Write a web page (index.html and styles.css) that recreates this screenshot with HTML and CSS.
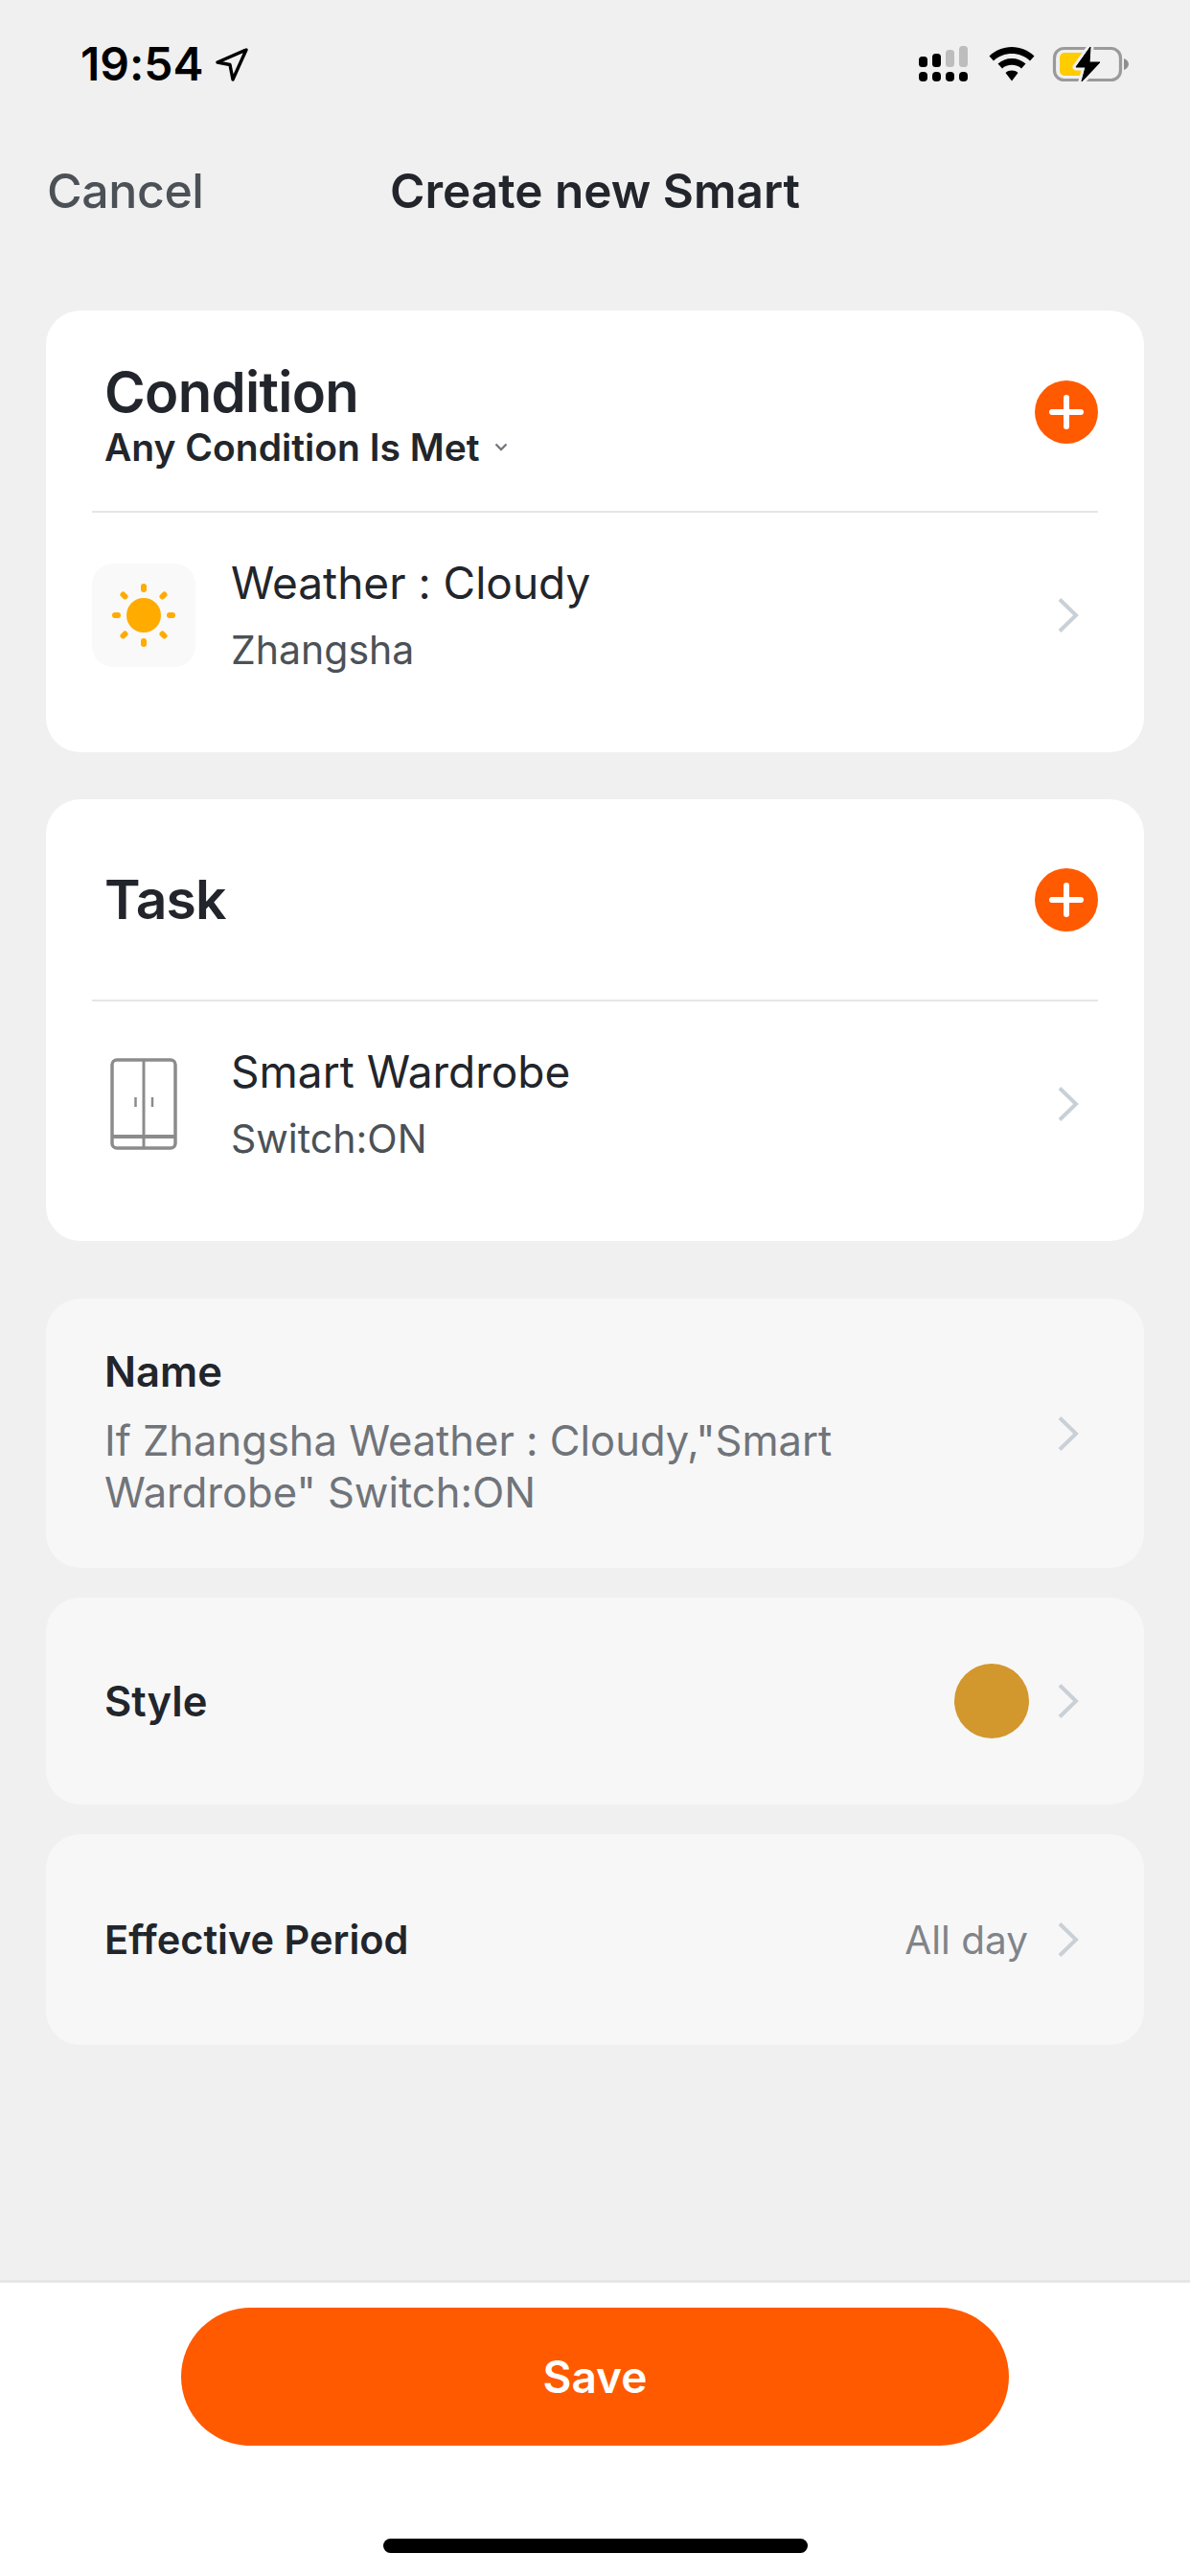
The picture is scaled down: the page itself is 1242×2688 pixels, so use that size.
FILE: index.html
```html
<!DOCTYPE html>
<html lang="en">
<head>
  <meta charset="UTF-8">
  <meta name="viewport" content="width=device-width, initial-scale=1.0">
  <title>Create new Smart</title>
  <link rel="stylesheet" href="styles.css">
</head>
<body>
  <div class="page">
    <div class="status-bar">
      <div class="status-left">
        <span class="time">19:54</span>
        <svg class="arrow" width="34" height="35" viewBox="0 0 34 35"><path d="M32 2 L2 15 L15 17.500 L18 33 Z" fill="none" stroke="#000" stroke-width="3.400" stroke-linejoin="round"/></svg>
      </div>
      <div class="status-right">
        <svg class="signal" width="52" height="38" viewBox="0 0 52 38">
          <rect x="0" y="11" width="9" height="11" rx="3.5" fill="#000"/>
          <rect x="14" y="8" width="9" height="14" rx="3.5" fill="#000"/>
          <rect x="28" y="4" width="9" height="18" rx="3.5" fill="#bdbdbd"/>
          <rect x="42" y="0" width="9" height="22" rx="3.5" fill="#bdbdbd"/>
          <rect x="0" y="27" width="9" height="10" rx="4" fill="#000"/>
          <rect x="14" y="27" width="9" height="10" rx="4" fill="#000"/>
          <rect x="28" y="27" width="9" height="10" rx="4" fill="#000"/>
          <rect x="42" y="27" width="9" height="10" rx="4" fill="#000"/>
        </svg>
        <svg class="wifi" width="48" height="36" viewBox="0 0 48 36">
          <path d="M24 0 C33 0 41 3.500 47.500 9.500 L43 14.500 C38 9.500 31 7 24 7 C17 7 10 9.500 5 14.500 L0.500 9.500 C7 3.500 15 0 24 0 Z" fill="#000"/>
          <path d="M24 12 C29.500 12 34.500 14 38.500 17.500 L34 22.500 C31.500 20 28 18.800 24 18.800 C20 18.800 16.500 20 14 22.500 L9.500 17.500 C13.500 14 18.500 12 24 12 Z" fill="#000"/>
          <path d="M24 24.500 C26.500 24.500 28.500 25.200 30.500 27 L24 35.500 L17.500 27 C19.500 25.200 21.500 24.500 24 24.500 Z" fill="#000"/>
        </svg>
        <svg class="battery" width="80" height="40" viewBox="0 0 80 40">
          <rect x="2.500" y="3.500" width="69" height="33" rx="10" fill="none" stroke="#9a9a9a" stroke-width="3.200"/>
          <path d="M75 14 C78 15 80 17.500 80 20 C80 22.500 78 25 75 26 Z" fill="#8e8e8e"/>
          <rect x="8" y="8" width="30" height="24" rx="5" fill="#ffcc00"/>
          <path d="M40 2 L25 23 L35 23 L31 38 L50 18 L39 18 Z" fill="#000" stroke="#f0f0f0" stroke-width="7" stroke-linejoin="round" paint-order="stroke"/>
          <path d="M40 2 L25 23 L35 23 L31 38 L50 18 L39 18 Z" fill="#000" stroke="#000" stroke-width="1" stroke-linejoin="round"/>
        </svg>
      </div>
    </div>

    <div class="nav-bar">
      <span class="cancel">Cancel</span>
      <span class="nav-title">Create new Smart</span>
    </div>

    <main class="content">
      <section class="card">
        <div class="card-head condition-head">
          <div class="condition-text">
            <div class="card-title">Condition</div>
            <div class="match-mode">Any Condition Is Met
              <svg width="14" height="10" viewBox="0 0 14 10"><path d="M1.500 1.500 L7 7 L12.500 1.500" fill="none" stroke="#77777f" stroke-width="2.400"/></svg>
            </div>
          </div>
          <div class="add-btn"></div>
        </div>
        <div class="item">
          <div class="item-icon weather-icon">
            <svg width="70" height="70" viewBox="0 0 70 70">
              <circle cx="35" cy="35" r="18" fill="#ffab00"/>
              <g stroke="#ffab00" stroke-width="6" stroke-linecap="round">
                <path d="M35 5 V8"/><path d="M35 62 V65"/>
                <path d="M5 35 H8"/><path d="M62 35 H65"/>
                <path d="M13.500 13.500 L15.500 15.500"/><path d="M54.500 54.500 L56.500 56.500"/>
                <path d="M56.500 13.500 L54.500 15.500"/><path d="M15.500 54.500 L13.500 56.500"/>
              </g>
            </svg>
          </div>
          <div class="item-text">
            <div class="item-name">Weather : Cloudy</div>
            <div class="item-sub">Zhangsha</div>
          </div>
          <svg class="chevron" width="22" height="36" viewBox="0 0 22 36"><path d="M2 1.500 L19 18 L2 34.500" fill="none" stroke="#c9d0d6" stroke-width="4"/></svg>
        </div>
      </section>

      <section class="card">
        <div class="card-head task-head">
          <div class="card-title task-title">Task</div>
          <div class="add-btn"></div>
        </div>
        <div class="item">
          <div class="item-icon">
            <svg width="70" height="96" viewBox="0 0 70 96" fill="none" stroke="#8c8c8c">
              <rect x="2" y="2" width="66" height="92" rx="5" stroke-width="3.500"/>
              <path d="M35 2 V94" stroke-width="3"/>
              <path d="M2 82 H68" stroke-width="4"/>
              <path d="M26.500 41 V51 M44 41 V51" stroke-width="2.500"/>
            </svg>
          </div>
          <div class="item-text">
            <div class="item-name">Smart Wardrobe</div>
            <div class="item-sub">Switch:ON</div>
          </div>
          <svg class="chevron" width="22" height="36" viewBox="0 0 22 36"><path d="M2 1.500 L19 18 L2 34.500" fill="none" stroke="#c9d0d6" stroke-width="4"/></svg>
        </div>
      </section>

      <section class="row name-row">
        <div class="row-main">
          <div class="row-label">Name</div>
          <div class="row-desc">If Zhangsha Weather : Cloudy,"Smart Wardrobe" Switch:ON</div>
        </div>
        <svg class="chevron" width="22" height="36" viewBox="0 0 22 36"><path d="M2 1.500 L19 18 L2 34.500" fill="none" stroke="#c9d0d6" stroke-width="4"/></svg>
      </section>

      <section class="row style-row">
        <div class="row-label">Style</div>
        <div class="row-end">
          <div class="style-dot"></div>
          <svg class="chevron" width="22" height="36" viewBox="0 0 22 36"><path d="M2 1.500 L19 18 L2 34.500" fill="none" stroke="#c9d0d6" stroke-width="4"/></svg>
        </div>
      </section>

      <section class="row period-row">
        <div class="row-label period-label">Effective Period</div>
        <div class="row-end">
          <span class="row-value">All day</span>
          <svg class="chevron" width="22" height="36" viewBox="0 0 22 36"><path d="M2 1.500 L19 18 L2 34.500" fill="none" stroke="#c9d0d6" stroke-width="4"/></svg>
        </div>
      </section>
    </main>

    <footer class="footer">
      <button class="save-btn">Save</button>
      <div class="home-bar"></div>
    </footer>
  </div>
</body>
</html>
```

FILE: styles.css
```css
* {
  box-sizing: border-box;
}
html, body {
  margin: 0;
  padding: 0;
}
body {
  font-family: Inter, "Liberation Sans", sans-serif;
  font-feature-settings: "calt" 0;
  background-color: #f0f0f0;
  color: #22252b;
}
.page {
  width: 1242px;
  height: 2688px;
  display: flex;
  flex-direction: column;
}

/* status bar */
.status-bar {
  height: 134px;
  padding: 44px 64px 0 84px;
  display: flex;
  justify-content: space-between;
  align-items: flex-start;
}
.status-left {
  display: flex;
  align-items: center;
  gap: 13px;
}
.time {
  font-size: 48px;
  line-height: 46px;
  font-weight: 600;
  color: #000;
}
.status-right {
  display: flex;
  align-items: center;
  gap: 21px;
  padding-top: 3px;
}
.battery {
  margin-left: -3px;
}

/* nav */
.nav-bar {
  position: relative;
  height: 190px;
  display: flex;
  justify-content: center;
  padding-top: 36px;
}
.cancel {
  position: absolute;
  left: 49px;
  top: 36px;
  font-size: 50px;
  line-height: 58px;
  font-weight: 500;
  letter-spacing: -0.400px;
  color: #4b5156;
}
.nav-title {
  font-size: 49.500px;
  line-height: 58px;
  font-weight: 600;
}

/* cards */
.content {
  flex: 1;
  padding: 0 48px;
}
.card {
  background-color: #fff;
  border-radius: 36px;
  height: 461px;
  margin-bottom: 49px;
  padding: 0 48px;
}
.card-head {
  display: flex;
  justify-content: space-between;
  align-items: center;
  border-bottom: 2px solid #e6e6e6;
  height: 211px;
}
.condition-head {
  padding: 2px 0 0 13px;
}
.condition-text {
  margin-top: 5px;
}
.task-head {
  padding: 0 0 0 13px;
}
.card-title {
  font-size: 58px;
  line-height: 68px;
  font-weight: 600;
  letter-spacing: -0.700px;
}
.task-title {
  font-size: 57px;
  letter-spacing: -0.800px;
}
.match-mode {
  font-size: 39px;
  line-height: 46px;
  font-weight: 600;
  margin-top: 1px;
  display: flex;
  align-items: center;
  gap: 15px;
}
.add-btn {
  width: 66px;
  height: 66px;
  border-radius: 50%;
  background-color: #ff5a00;
  position: relative;
}
.add-btn::before,
.add-btn::after {
  content: "";
  position: absolute;
  background-color: #fff;
  border-radius: 3px;
}
.add-btn::before {
  left: 15px;
  top: 30px;
  width: 36px;
  height: 6px;
}
.add-btn::after {
  left: 30px;
  top: 15px;
  width: 6px;
  height: 36px;
}
.item {
  height: 250px;
  display: flex;
  align-items: center;
  padding-bottom: 36px;
}
.item-icon {
  width: 108px;
  height: 108px;
  margin-right: 37px;
  display: flex;
  align-items: center;
  justify-content: center;
  flex: none;
}
.weather-icon {
  background-color: #f9f9f9;
  border-radius: 22px;
}
.item-text {
  flex: 1;
  padding-bottom: 2px;
}
.item-name {
  font-size: 46px;
  line-height: 56px;
}
.item-sub {
  font-size: 41px;
  line-height: 48px;
  margin-top: 18px;
  color: #4b5156;
}
.chevron {
  flex: none;
}
.card .chevron {
  margin-right: 20px;
}

/* rows */
.row {
  background-color: #f7f7f7;
  border-radius: 36px;
  padding: 0 68px 0 61px;
  display: flex;
  justify-content: space-between;
  align-items: center;
  margin-bottom: 31px;
}
.name-row {
  height: 281px;
  margin-top: 60px;
}
.style-row {
  height: 216px;
}
.period-row {
  height: 220px;
}
.row-main {
  width: 860px;
}
.row-label {
  font-size: 43.500px;
  line-height: 48px;
  font-weight: 600;
}
.period-label {
  font-size: 41.500px;
}
.row-desc {
  font-size: 43.500px;
  line-height: 54px;
  margin-top: 21px;
  color: #70747a;
  padding-right: 40px;
}
.row-end {
  display: flex;
  align-items: center;
}
.style-dot {
  width: 78px;
  height: 78px;
  border-radius: 50%;
  background-color: #d2972d;
  margin-right: 30px;
}
.row-value {
  font-size: 40.500px;
  color: #80848a;
  margin-right: 31px;
}

/* footer */
.footer {
  height: 309px;
  background-color: #fff;
  border-top: 3px solid #e6e6e6;
  padding-top: 26px;
  display: flex;
  flex-direction: column;
  align-items: center;
}
.save-btn {
  width: 864px;
  height: 144px;
  border: none;
  border-radius: 72px;
  background-color: #ff5a00;
  color: #fff;
  font-family: inherit;
  font-size: 46px;
  font-weight: 600;
}
.home-bar {
  width: 443px;
  height: 15px;
  border-radius: 8px;
  background-color: #000;
  margin-top: 97px;
}
```
